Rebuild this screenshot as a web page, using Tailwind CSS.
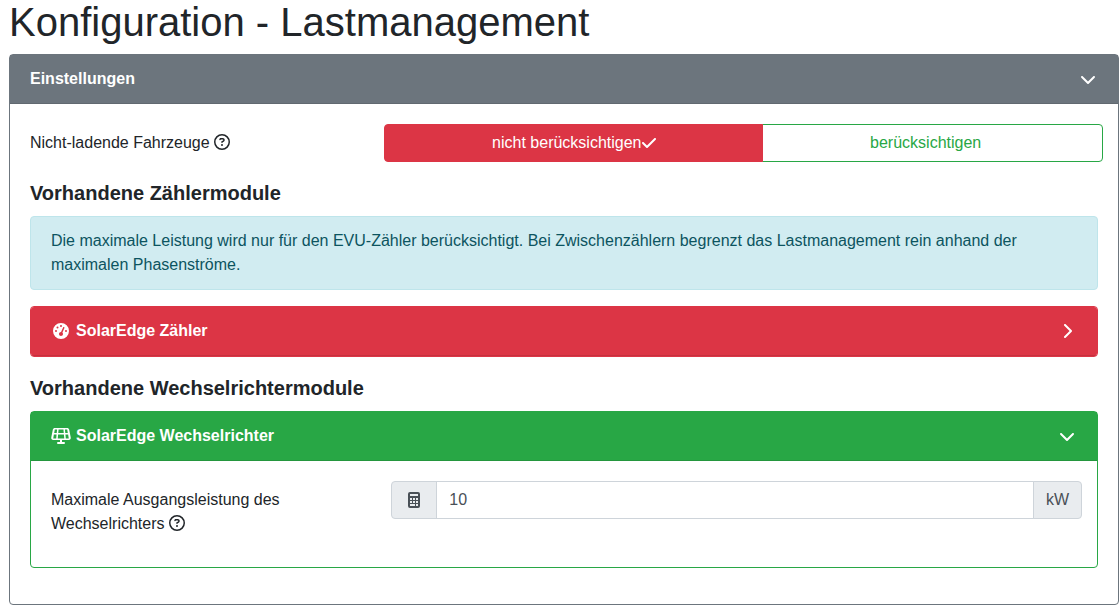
<!DOCTYPE html>
<html lang="de">
<head>
<meta charset="utf-8">
<meta name="viewport" content="width=device-width, initial-scale=1">
<title>Konfiguration - Lastmanagement</title>
<script src="https://cdn.jsdelivr.net/npm/@tailwindcss/browser@4"></script>
</head>
<body class="bg-white pl-[9px] pr-px font-['Liberation_Sans',Arial,sans-serif] text-base leading-6 text-[#212529]">
<svg class="hidden" aria-hidden="true">
  <symbol id="help" viewBox="0 0 512 512"><path d="M464 256A208 208 0 1 0 48 256a208 208 0 1 0 416 0zM0 256a256 256 0 1 1 512 0A256 256 0 1 1 0 256zm169.8-90.7c7.9-22.3 29.1-37.3 52.8-37.3h58.3c34.9 0 63.1 28.3 63.1 63.1c0 22.6-12.1 43.5-31.7 54.8L280 264.4c-.2 13-10.9 23.6-24 23.6c-13.3 0-24-10.7-24-24V250.5c0-8.6 4.6-16.5 12.1-20.8l44.3-25.4c4.7-2.7 7.6-7.7 7.6-13.1c0-8.4-6.8-15.1-15.1-15.1H222.6c-3.4 0-6.4 2.1-7.5 5.3l-.4 1.2c-4.4 12.5-18.2 19-30.6 14.6s-19-18.2-14.6-30.6l.4-1.2zM224 352a32 32 0 1 1 64 0 32 32 0 1 1 -64 0z"/></symbol>
  <symbol id="down" viewBox="0 0 512 512"><path d="M233.4 406.6c12.5 12.5 32.8 12.5 45.3 0l192-192c12.5-12.5 12.5-32.8 0-45.3s-32.8-12.5-45.3 0L256 338.7 86.6 169.4c-12.5-12.5-32.8-12.5-45.3 0s-12.5 32.8 0 45.3l192 192z"/></symbol>
  <symbol id="right" viewBox="0 0 320 512"><path d="M310.6 233.4c12.5 12.5 12.5 32.8 0 45.3l-192 192c-12.5 12.5-32.8 12.5-45.3 0s-12.5-32.8 0-45.3L242.7 256 73.4 86.6c-12.5-12.5-12.5-32.8 0-45.3s32.8-12.5 45.3 0l192 192z"/></symbol>
  <symbol id="check" viewBox="0 0 448 512"><path d="M438.6 105.4c12.5 12.5 12.5 32.8 0 45.3l-256 256c-12.5 12.5-32.8 12.5-45.3 0l-128-128c-12.5-12.5-12.5-32.8 0-45.3s32.8-12.5 45.3 0L160 338.7 393.4 105.4c12.5-12.5 32.8-12.5 45.3 0z"/></symbol>
</svg>

<h1 class="mb-[10px] text-[40px] leading-[44px]">Konfiguration - Lastmanagement</h1>

<main class="rounded border border-[#6c757d]">
  <h2 class="font-bold text-white">
    <button type="button" aria-expanded="true" class="flex w-full items-center justify-between border-b border-[#616970] bg-[#6c757d] px-5 py-3 text-left">
      Einstellungen
      <svg class="mr-[2px] h-4 w-4 fill-current" aria-hidden="true"><use href="#down"/></svg>
    </button>
  </h2>
  <form class="px-5 pt-5 pb-9">
    <div role="radiogroup" aria-labelledby="vehicles-label" class="-mx-[5px] flex pb-4">
      <div class="w-1/3 px-[5px] pt-[7px]"><span id="vehicles-label">Nicht-ladende Fahrzeuge</span> <button type="button" aria-label="Hilfe" class="align-[-2px]"><svg class="h-4 w-4 fill-current" aria-hidden="true"><use href="#help"/></svg></button></div>
      <div class="flex flex-1">
        <label class="relative z-10 flex flex-auto items-center justify-center rounded-l border border-[#dc3545] bg-[#dc3545] px-3 py-[6px] text-white"><input type="radio" name="vehicles" class="sr-only" checked>nicht berücksichtigen<svg class="h-4 w-[14px] fill-current" aria-hidden="true"><use href="#check"/></svg></label>
        <label class="-ml-px flex flex-auto items-center justify-center rounded-r border border-[#28a745] px-3 py-[6px] text-[#28a745]"><input type="radio" name="vehicles" class="sr-only">berücksichtigen<svg class="invisible h-4 w-[14px]" aria-hidden="true"><use href="#check"/></svg></label>
      </div>
    </div>

    <h3 class="mb-2 text-xl leading-[30px] font-bold">Vorhandene Zählermodule</h3>
    <p class="mb-4 rounded border border-[#bee5eb] bg-[#d1ecf1] px-5 py-3 text-[#0c5460]">Die maximale Leistung wird nur für den EVU-Zähler berücksichtigt. Bei Zwischenzählern begrenzt das Lastmanagement rein anhand der maximalen Phasenströme.</p>

    <section class="mb-4 overflow-hidden rounded border border-[#dc3545]">
      <h4 class="font-bold text-white">
        <button type="button" aria-expanded="false" class="flex w-full items-center border-b border-[#c6303e] bg-[#dc3545] px-5 py-3 text-left">
          <svg class="mr-[5px] h-4 w-5 fill-current" viewBox="0 0 512 512" aria-hidden="true"><path fill-rule="evenodd" d="M0 256a256 256 0 1 1 512 0A256 256 0 1 1 0 256zM288 96a32 32 0 1 0 -64 0 32 32 0 1 0 64 0zM256 416c35.3 0 64-28.7 64-64c0-17.4-6.9-33.1-18.1-44.6L366 161.7c5.3-12.1-.2-26.3-12.3-31.6s-26.3 .2-31.6 12.3L257.9 288c-.6 0-1.3 0-1.9 0c-35.3 0-64 28.7-64 64s28.7 64 64 64zM176 144a32 32 0 1 0 -64 0 32 32 0 1 0 64 0zM96 288a32 32 0 1 0 0-64 32 32 0 1 0 0 64zm352-32a32 32 0 1 0 -64 0 32 32 0 1 0 64 0z"/></svg>
          SolarEdge Zähler
          <svg class="mr-[5px] ml-auto h-4 w-[10px] fill-current" aria-hidden="true"><use href="#right"/></svg>
        </button>
      </h4>
    </section>

    <h3 class="mb-2 text-xl leading-[30px] font-bold">Vorhandene Wechselrichtermodule</h3>
    <section class="rounded border border-[#28a745]">
      <h4 class="font-bold text-white">
        <button type="button" aria-expanded="true" class="flex w-full items-center border-b border-[#24963e] bg-[#28a745] px-5 py-3 text-left">
          <svg class="mr-[5px] h-4 w-5 fill-current" viewBox="0 0 640 512" aria-hidden="true"><path fill-rule="evenodd" d="M122.200 0C91.700 0 65.500 21.500 59.500 51.400L8.300 307.400C.4 347 30.600 384 71 384H288v64H224a32 32 0 1 0 0 64H416a32 32 0 1 0 0-64H352V384H569c40.400 0 70.700-36.900 62.800-76.600l-51.200-256C574.500 21.500 548.300 0 517.800 0zM122.200 48h72l-11 112H101.500zM242.500 48h155l11 112H231.500zM446 48h72l20.700 112H457zM92 208h86l-11 128H71zM226.500 208h187l11 128h-209zM462 208h86l21 128h-96z"/></svg>
          SolarEdge Wechselrichter
          <svg class="mr-[2px] ml-auto h-4 w-4 fill-current" aria-hidden="true"><use href="#down"/></svg>
        </button>
      </h4>
      <div class="px-[15px] pt-5 pb-[31px]">
        <div class="flex">
          <div class="w-1/3 px-[5px] pt-[7px]"><label for="power">Maximale Ausgangsleistung des Wechselrichters</label> <button type="button" aria-label="Hilfe" class="align-[-2px]"><svg class="h-4 w-4 fill-current" aria-hidden="true"><use href="#help"/></svg></button></div>
          <div class="flex h-[38px] flex-1 text-[#495057]">
            <span class="flex w-[46px] items-center justify-center rounded-l border border-[#ced4da] bg-[#e9ecef]">
              <svg class="h-4 w-3 fill-current" viewBox="0 0 384 512" aria-hidden="true"><path fill-rule="evenodd" d="M64 0H320a64 64 0 0 1 64 64V448a64 64 0 0 1-64 64H64a64 64 0 0 1-64-64V64A64 64 0 0 1 64 0zM64 64v64H320V64zM64 192h64v64H64zM160 192h64v64h-64zM256 192h64v64h-64zM64 288h64v64H64zM160 288h64v64h-64zM256 288h64v64h-64zM64 384h160v64H64zM256 384h64v64h-64z"/></svg>
            </span>
            <input id="power" type="text" inputmode="decimal" value="10" class="-ml-px min-w-0 flex-1 border border-[#ced4da] bg-white px-3">
            <span class="-ml-px flex items-center rounded-r border border-[#ced4da] bg-[#e9ecef] px-3">kW</span>
          </div>
        </div>
      </div>
    </section>
  </form>
</main>
</body>
</html>
